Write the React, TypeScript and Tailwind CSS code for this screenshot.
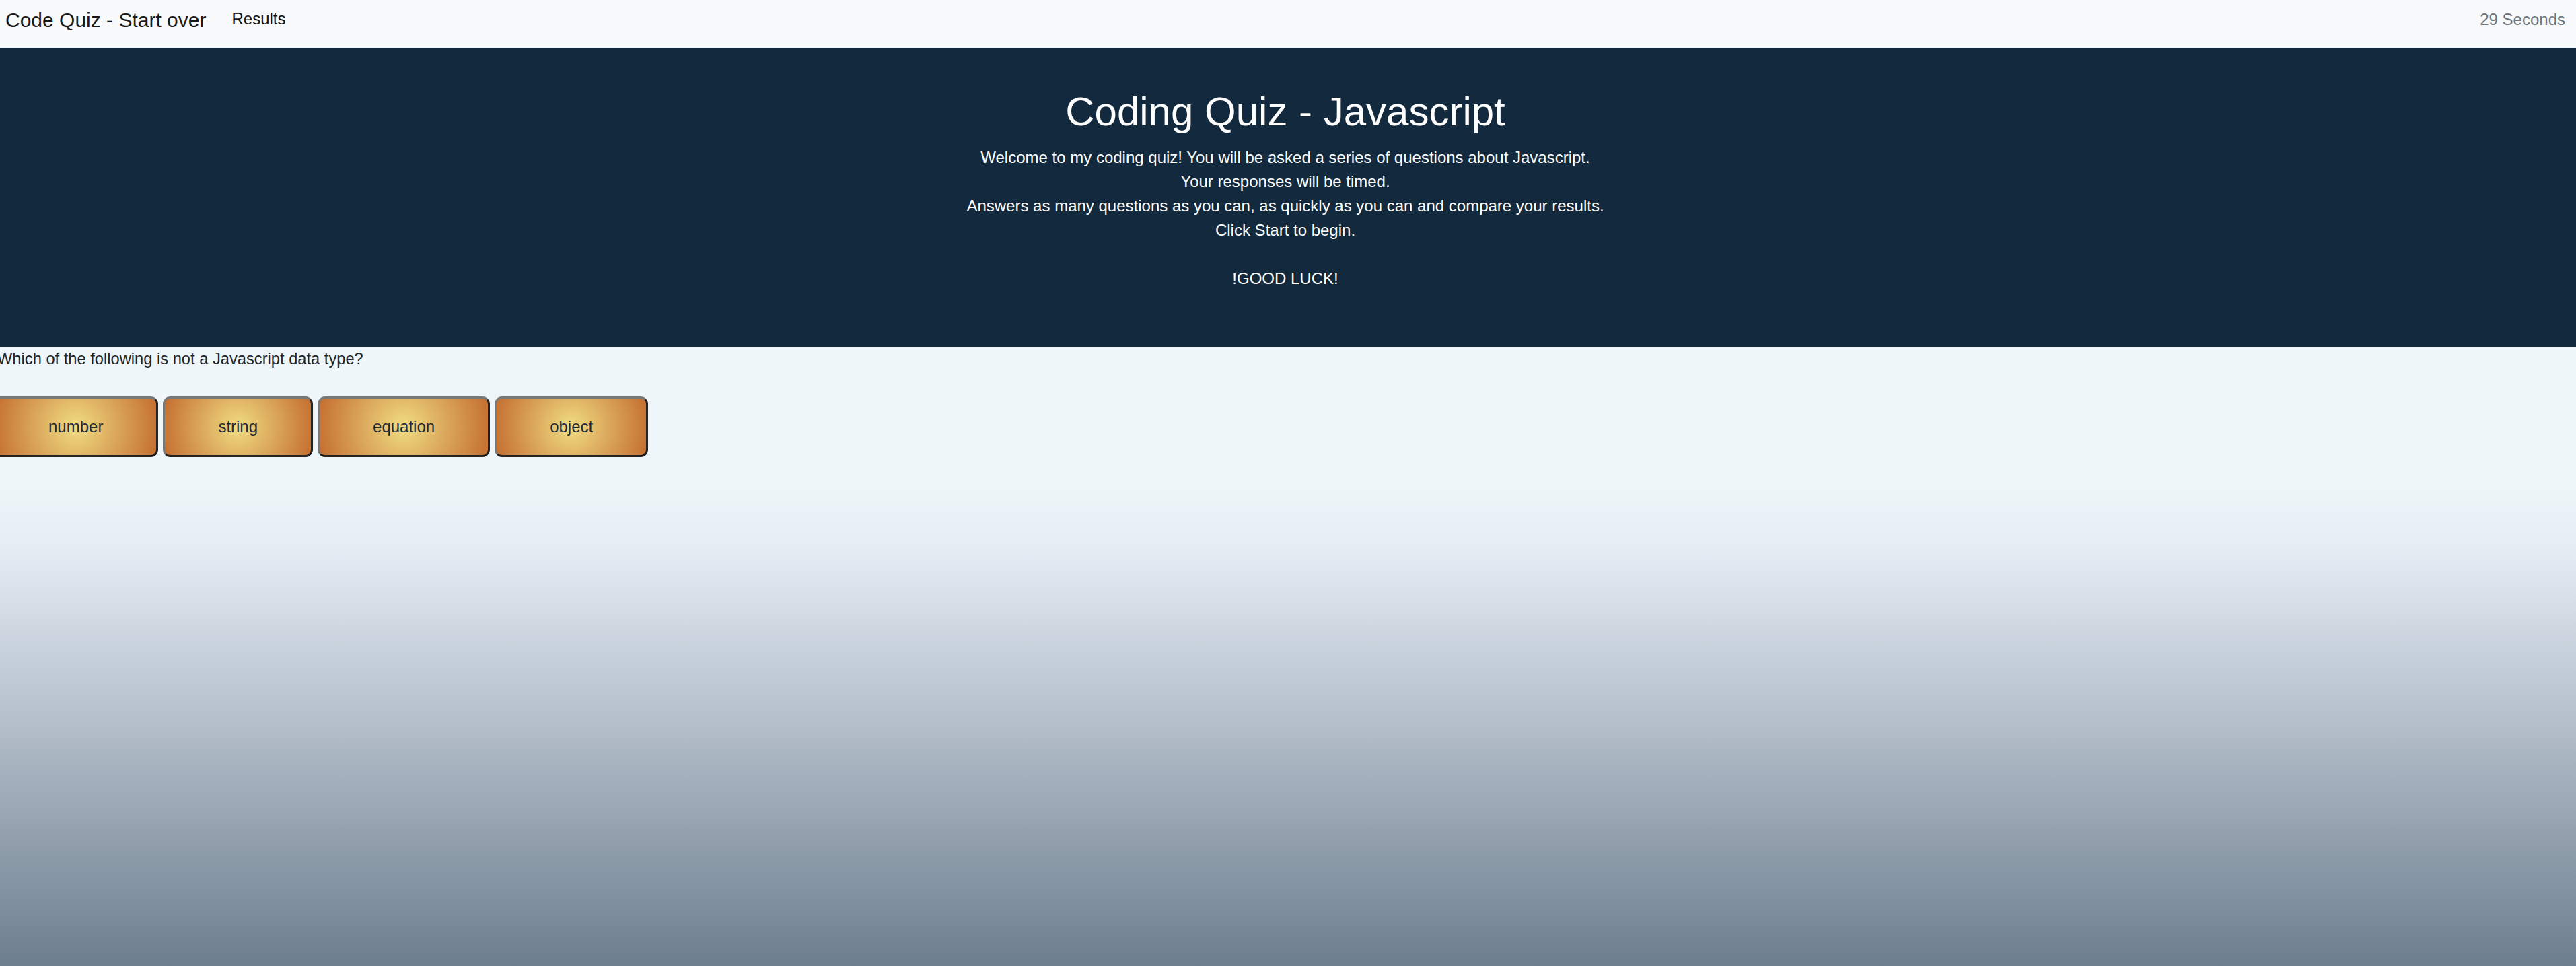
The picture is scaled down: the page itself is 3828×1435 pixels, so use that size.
const ANSWERS = ['number', 'string', 'equation', 'object'];

const INTRO = [
  'Welcome to my coding quiz! You will be asked a series of questions about Javascript.',
  'Your responses will be timed.',
  'Answers as many questions as you can, as quickly as you can and compare your results.',
  'Click Start to begin.',
];

export default function App() {
  return (
    <div className="min-h-screen overflow-hidden font-['Liberation_Sans',Arial,sans-serif] text-[24px] leading-[36px] text-[#212529] bg-[linear-gradient(180deg,#eef6f9_50%,#e5ecf4_57%,#6d7e8e_100%)]">
      {/* navbar */}
      <nav className="flex h-[71px] items-start bg-[#f8f9fa] pl-[8px] pr-[16px]">
        <a className="pt-[12px] text-[30px] leading-[36px] text-[#1a1a1a]">Code Quiz - Start over</a>
        <a className="ml-[38px] pt-[10px] text-[#111]">Results</a>
        <span className="ml-auto pt-[11px] text-[#6c757d]">29 Seconds</span>
      </nav>

      {/* jumbotron */}
      <header className="bg-[#13293d] pt-[59px] pb-[83px] pr-[8px] text-center text-white">
        <h1 className="mb-[14px] text-[60px] leading-[72px] font-normal">Coding Quiz - Javascript</h1>
        <p>
          {INTRO.map((line) => (
            <span key={line} className="block">{line}</span>
          ))}
          <br />
          !GOOD LUCK!
        </p>
      </header>

      {/* question */}
      <main>
        <p className="-ml-[4px] text-[23.7px]">Which of the following is not a Javascript data type?</p>
        <div className="mt-[38px] -ml-[10px] flex gap-[7px]">
          {ANSWERS.map((a) => (
            <button
              key={a}
              className="rounded-[11px] border-[3px] border-t-[#787878] border-l-[#787878] border-b-[#222] border-r-[#222] bg-[radial-gradient(circle,#f0dc82_0%,#c46e30_100%)] px-[79px] py-[24px] text-[#1b2b3b]"
            >
              {a}
            </button>
          ))}
        </div>
      </main>
    </div>
  );
}
